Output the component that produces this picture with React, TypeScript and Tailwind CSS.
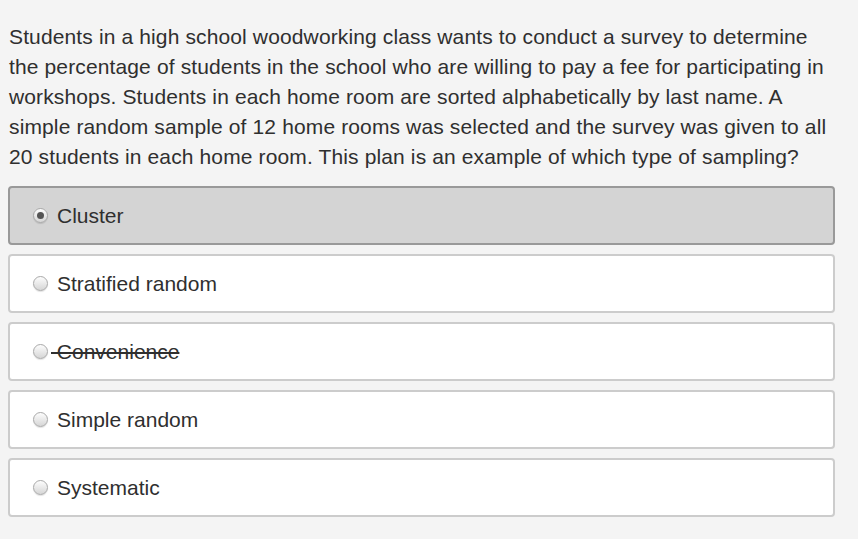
import React from 'react'

const options = [
  { id: 1, label: 'Cluster', selected: true, struck: false },
  { id: 2, label: 'Stratified random', selected: false, struck: false },
  { id: 3, label: 'Convenience', selected: false, struck: true },
  { id: 4, label: 'Simple random', selected: false, struck: false },
  { id: 5, label: 'Systematic', selected: false, struck: false },
]

const Radio: React.FC<{ checked: boolean }> = ({ checked }) => (
  <span className="flex h-[15px] w-[15px] shrink-0 items-center justify-center rounded-full border border-[#a9a9a9] bg-gradient-to-b from-[#fdfdfd] to-[#d6d6d6] shadow-[0_1px_1px_rgba(0,0,0,0.12)]">
    {checked && <span className="h-[7px] w-[7px] rounded-full bg-[#555]" />}
  </span>
)

const App: React.FC = () => {
  return (
    <div className="min-h-[539px] w-[858px] bg-[#f4f4f4] font-['Liberation_Sans',Arial,sans-serif] text-[#2f2f2f]">
      <div className="w-[835px] pl-[8px] pt-[22px]">
        <p className="w-[824px] px-px text-[21px] leading-[30px] tracking-[0.13px]">
          Students in a high school woodworking class wants to conduct a survey to determine the percentage of
          students in the school who are willing to pay a fee for participating in workshops. Students in each home
          room are sorted alphabetically by last name. A simple random sample of 12 home rooms was selected and the
          survey was given to all 20 students in each home room. This plan is an example of which type of sampling?
        </p>

        <div className="mt-[14px] flex flex-col gap-[9px]">
          {options.map((option) => (
            <div
              key={option.id}
              className={`flex h-[59px] items-center rounded-[4px] border-2 pl-[23px] ${
                option.selected ? 'border-[#999] bg-[#d4d4d4]' : 'border-[#ccc] bg-white'
              }`}
            >
              <Radio checked={option.selected} />
              {option.struck ? (
                <span className="ml-[3px] text-[21px] leading-none line-through">{'\u00a0' + option.label}</span>
              ) : (
                <span className="ml-[9px] text-[21px] leading-none">{option.label}</span>
              )}
            </div>
          ))}
        </div>
      </div>
    </div>
  )
}

export default App
